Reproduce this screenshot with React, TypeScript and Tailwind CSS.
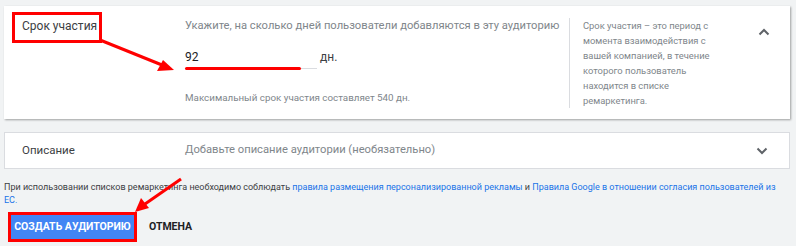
import React from 'react';

const ChevronUp = () => (
    <svg width="12" height="8" viewBox="0 0 12 8" className="block">
        <path d="M1.5 6.5 L6 2 L10.5 6.5" fill="none" stroke="#5f6368" strokeWidth="2" />
    </svg>
);

const ChevronDown = () => (
    <svg width="12" height="8" viewBox="0 0 12 8" className="block">
        <path d="M1.5 1.5 L6 6 L10.5 1.5" fill="none" stroke="#5f6368" strokeWidth="2" />
    </svg>
);

const App = () => {
    return (
        <div className="relative h-[246px] w-[796px] overflow-hidden bg-[#f1f3f4] px-[4px] pt-[6px] font-['Roboto',sans-serif] text-[#3c4043]">
            {/* Срок участия */}
            <div className="flex w-[786px] bg-white shadow-[1px_1px_2px_rgba(0,0,0,0.35)]">
                <div className="w-[181px] pl-[18px] pt-[12px] text-[12px] leading-[16px] text-[#3c4043]">Срок участия</div>
                <div className="w-[384px] pt-[12px]">
                    <div className="whitespace-nowrap text-[11.2px] leading-[16px] text-[#80868b]">Укажите, на сколько дней пользователи добавляются в эту аудиторию</div>
                    <div className="mt-[11px] flex items-center">
                        <div className="relative h-[24px] w-[132px] border-b border-[#dadce0] text-[12px] leading-[24px] text-[#202124]">
                            92
                            <div className="absolute bottom-[-2px] left-0 h-[3px] w-[116px] rounded-full bg-[#ff0000]" />
                        </div>
                        <span className="ml-[3px] text-[12px] text-[#3c4043]">дн.</span>
                    </div>
                    <div className="mt-[22px] whitespace-nowrap text-[9.8px] leading-[14px] text-[#80868b]">Максимальный срок участия составляет 540 дн.</div>
                </div>
                <div className="mt-[12px] mb-[11px] w-[172px] border-l border-[#dadce0] pl-[13px] text-[9.4px] leading-[15px] text-[#80868b]">
                    Срок участия – это период с<br />
                    момента взаимодействия с<br />
                    вашей компанией, в течение<br />
                    которого пользователь<br />
                    находится в списке<br />
                    ремаркетинга.
                </div>
                <div className="flex flex-1 justify-center pt-[22px] pr-[4px]">
                    <div>
                        <ChevronUp />
                    </div>
                </div>
            </div>

            {/* Описание */}
            <div className="mt-[13px] flex h-[37px] w-[786px] items-center border border-[#dadce0] bg-white">
                <div className="w-[180px] pl-[17px] text-[11.5px] text-[#3c4043]">Описание</div>
                <div className="flex-1 text-[11.2px] text-[#80868b]">Добавьте описание аудитории (необязательно)</div>
                <div className="flex w-[46px] justify-center pr-[8px]">
                    <ChevronDown />
                </div>
            </div>

            <div className="mt-[12px] w-[786px] whitespace-nowrap text-[9px] leading-[13px] text-[#3c4043]">
                При использовании списков ремаркетинга необходимо соблюдать{' '}
                <span className="text-[#1a73e8]">правила размещения персонализированной рекламы</span> и{' '}
                <span className="text-[#1a73e8]">Правила Google в отношении согласия пользователей из</span>
                <br />
                <span className="text-[#1a73e8]">ЕС.</span>
            </div>

            <div className="mt-[5px] flex items-center">
                <button className="ml-[4px] h-[30px] w-[129px] whitespace-nowrap border-[3px] border-[#ff0000] bg-[#4285f4] text-[10.5px] font-bold text-white">
                    СОЗДАТЬ АУДИТОРИЮ
                </button>
                <button className="ml-[12px] text-[10.5px] font-bold text-[#202124]">ОТМЕНА</button>
            </div>

            {/* annotation: label frame + arrows */}
            <div className="pointer-events-none absolute left-[12px] top-[12px] h-[31px] w-[90px] border-[3px] border-[#ff0000]" />
            <svg className="pointer-events-none absolute left-0 top-0" width="796" height="246">
                <line x1="100" y1="40" x2="162" y2="65" stroke="#ff0000" strokeWidth="3" />
                <polygon points="174,70 157,71 163,60" fill="#ff0000" />
                <line x1="181" y1="179" x2="145" y2="204" stroke="#ff0000" strokeWidth="3" />
                <polygon points="135,212 141,198 149,208" fill="#ff0000" />
            </svg>
        </div>
    );
};

export default App;
